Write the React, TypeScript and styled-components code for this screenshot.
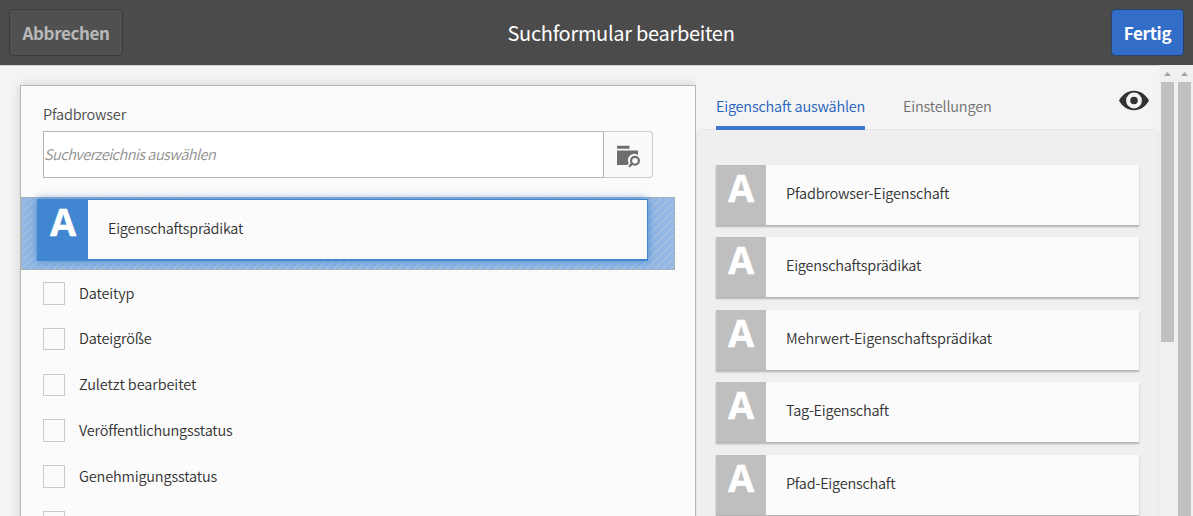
import React from "react";
import styled, { createGlobalStyle, css } from "styled-components";

const GlobalStyle = createGlobalStyle`
  * { box-sizing: border-box; }
  html, body { margin: 0; padding: 0; overflow: hidden; }
  body {
    font-family: "Noto Sans CJK SC", "Noto Sans", sans-serif;
    font-weight: 350;
    font-size: 14.5px;
    line-height: 20px;
    color: #323232;
    background: #f4f4f4;
  }
`;

const Page = styled.div`
  display: flex;
  flex-direction: column;
  width: 100%;
  height: 516px;
  overflow: hidden;
`;

const Text = styled.span<{ $track?: number }>`
  display: block;
  white-space: nowrap;
  letter-spacing: ${(p) => p.$track ?? -0.24}px;
`;

const Header = styled.header`
  flex: none;
  display: grid;
  grid-template-columns: 114px 1fr 73px;
  align-items: center;
  height: 65px;
  padding: 0 9px;
  background: #4b4b4b;
`;

const HeaderButton = styled.button<{ $primary?: boolean }>`
  display: flex;
  align-items: center;
  justify-content: center;
  height: 47px;
  padding: 0;
  border: 1px solid ${(p) => (p.$primary ? "#2b4168" : "#3b3b3b")};
  border-radius: 4px;
  background: ${(p) => (p.$primary ? "#326ec8" : "#505050")};
  color: ${(p) => (p.$primary ? "#ffffff" : "#b9b9b9")};
  font: inherit;
  font-size: 17px;
  font-weight: 700;
`;

const Title = styled.h1`
  margin: 0;
  padding-left: 8px;
  display: flex;
  justify-content: center;
  font-size: 20px;
  font-weight: 400;
  line-height: 26px;
  color: #ffffff;
`;

const Content = styled.main`
  flex: 1;
  display: flex;
  min-height: 0;
`;

const FormColumn = styled.section`
  flex: none;
  width: 696px;
  padding: 19px 0 0 20px;
  border-top: 1px solid #d2d2d2;
  overflow: hidden;
`;

const FormPanel = styled.div`
  height: 500px;
  border: 1px solid #b5b5b5;
  background: #fbfbfb;
  box-shadow: 0 0 10px rgba(0, 0, 0, 0.15);
`;

const PathField = styled.div`
  padding: 18px 0 0 22px;
  height: 111px;
`;

const FieldLabel = styled.label`
  display: block;
  height: 27px;
  color: #4b4b4b;
`;

const InputGroup = styled.div`
  display: flex;
  width: 610px;
  height: 47px;
`;

const PathInput = styled.div`
  flex: 1;
  display: flex;
  align-items: center;
  padding-bottom: 2px;
  border: 1px solid #b5b5b5;
  background: #ffffff;
  color: #8e8e8e;
  font-style: italic;
`;

const BrowseButton = styled.button`
  display: flex;
  align-items: center;
  justify-content: center;
  width: 49px;
  padding: 3px 0 0;
  border: 1px solid #cccccc;
  border-left: 0;
  border-radius: 0 4px 4px 0;
  background: #fafafa;
`;

const SelectedRow = styled.div`
  width: 654px;
  height: 73px;
  padding: 1px 0 0 15px;
  border: 1px dashed #aaaaaa;
  background: repeating-linear-gradient(
    135deg,
    #91b8e6 0 4.4px,
    #b2c3d6 4.8px 5.3px,
    #91b8e6 5.66px
  );
`;

const Card = styled.div<{ $active?: boolean }>`
  display: flex;
  height: 60px;
  background: #fbfbfb;
  box-shadow: 0 1px 0 #b4b4b4, 0 2px 2px rgba(0, 0, 0, 0.25);
  ${(p) =>
    p.$active &&
    css`
      width: 611px;
      height: 62px;
      border: 1px solid #4186d0;
      border-bottom-width: 2px;
      box-shadow: 0 0 8px rgba(50, 120, 200, 0.75);
    `}
`;

const Tile = styled.div<{ $active?: boolean }>`
  flex: none;
  width: 50px;
  background: ${(p) => (p.$active ? "#4186d0" : "#bfbfbf")};
  color: #ffffff;
  font-family: "Open Sans", sans-serif;
  font-size: 38px;
  font-weight: 700;
  -webkit-text-stroke: 0.4px #ffffff;
  line-height: ${(p) => (p.$active ? 43 : 44)}px;
  text-align: center;
`;

const CardLabel = styled.div`
  display: flex;
  align-items: center;
  padding: 0 0 4px 20px;
`;

const CheckList = styled.ul`
  margin: 0;
  padding: 12px 0 0 22px;
  list-style: none;
`;

const CheckRow = styled.li`
  display: flex;
  gap: 14px;
  height: 45.75px;
  ${Text} { padding-top: 0.55px; }
`;

const CheckBox = styled.span`
  width: 22px;
  height: 22.5px;
  border: 1px solid #cacaca;
  background: #fbfbfb;
`;

const SideColumn = styled.aside`
  flex: none;
  display: flex;
  flex-direction: column;
  width: 463px;
  border-top: 1px solid #d2d2d2;
`;

const TabBar = styled.nav`
  flex: none;
  display: flex;
  height: 63px;
  padding-left: 20px;
  gap: 38px;
`;

const Tab = styled.div<{ $selected?: boolean; $width: number }>`
  flex: none;
  width: ${(p) => p.$width}px;
  height: 64px;
  padding-top: 30px;
  z-index: 1;
  border-bottom: 4px solid ${(p) => (p.$selected ? "#4178cd" : "transparent")};
  color: ${(p) => (p.$selected ? "#2361bd" : "#707070")};
`;

const PreviewButton = styled.div`
  margin: 24px 10px 0 auto;
  height: 22px;
`;

const PropertyPanel = styled.div`
  flex: 1;
  min-height: 0;
  display: flex;
  flex-direction: column;
  gap: 12.4px;
  padding: 35px 19px 0;
  overflow: hidden;
  border: 1px solid #e6e6e6;
  border-bottom: 0;
  border-radius: 6px 6px 0 0;
  background: #efefef;
  ${Card} { flex: none; }
`;

const ScrollTrack = styled.div`
  flex: none;
  display: flex;
  flex-direction: column;
  align-items: center;
  width: 17px;
  background: #f1f1f1;
`;

const ScrollArrow = styled.svg`
  flex: none;
  width: 17px;
  height: 17px;
`;

const ScrollThumb = styled.div<{ $height: number }>`
  flex: none;
  width: 13px;
  height: ${(p) => p.$height}px;
  background: #c1c1c1;
`;

const FolderSearchIcon = () => (
  <svg width="24" height="23" viewBox="0 0 24 23" fill="none">
    <path d="M1 .8h12.500v3H1zM1 5.500h21v4.700a6.200 6.200 0 0 0-9.300 7.700L11.500 20H1z" fill="#6e6e6e" />
    <circle cx="19" cy="15.800" r="3.900" stroke="#6e6e6e" strokeWidth="2.200" />
    <path d="M16.200 18.600l-3.200 3.200" stroke="#6e6e6e" strokeWidth="2.300" />
  </svg>
);

const EyeIcon = () => (
  <svg width="30" height="22" viewBox="0 0 30 22">
    <path
      fillRule="evenodd"
      fill="#323232"
      d="M0 10.500C3.500 4.300 8.500.7 15 .7s11.500 3.600 15 9.800c-3.500 6.200-8.500 9.700-15 9.700S3.500 16.700 0 10.500zM15 2.600a7.900 7.900 0 1 0 0 15.800 7.900 7.900 0 0 0 0-15.800zM15 6.700a3.800 3.800 0 1 1 0 7.600A3.800 3.800 0 0 1 15 6.700z"
    />
  </svg>
);

const Scrollbar = ({ height }: { height: number }) => (
  <ScrollTrack>
    <ScrollArrow viewBox="0 0 17 17">
      <path d="M5 11l3.500-4 3.500 4z" fill="#a3a3a3" />
    </ScrollArrow>
    <ScrollThumb $height={height} />
  </ScrollTrack>
);

const filters = [
  { label: "Dateityp", track: -0.14 },
  { label: "Dateigröße", track: -0.14 },
  { label: "Zuletzt bearbeitet", track: -0.1 },
  { label: "Veröffentlichungsstatus", track: -0.17 },
  { label: "Genehmigungsstatus", track: -0.17 },
  { label: "", track: 0 },
];

const properties = [
  { label: "Pfadbrowser-Eigenschaft", track: -0.18 },
  { label: "Eigenschaftsprädikat", track: -0.26 },
  { label: "Mehrwert-Eigenschaftsprädikat", track: -0.11 },
  { label: "Tag-Eigenschaft", track: -0.24 },
  { label: "Pfad-Eigenschaft", track: -0.24 },
];

export default function App() {
  return (
    <>
      <GlobalStyle />
      <Page>
        <Header>
          <HeaderButton><Text $track={-0.4}>Abbrechen</Text></HeaderButton>
          <Title><Text $track={-0.3}>Suchformular bearbeiten</Text></Title>
          <HeaderButton $primary><Text $track={-0.3}>Fertig</Text></HeaderButton>
        </Header>
        <Content>
          <FormColumn>
            <FormPanel>
              <PathField>
                <FieldLabel><Text $track={-0.18}>Pfadbrowser</Text></FieldLabel>
                <InputGroup>
                  <PathInput><Text $track={-0.5}>Suchverzeichnis auswählen</Text></PathInput>
                  <BrowseButton aria-label="Durchsuchen"><FolderSearchIcon /></BrowseButton>
                </InputGroup>
              </PathField>
              <SelectedRow>
                <Card $active>
                  <Tile $active>A</Tile>
                  <CardLabel><Text $track={-0.26}>Eigenschaftsprädikat</Text></CardLabel>
                </Card>
              </SelectedRow>
              <CheckList>
                {filters.map((f, i) => (
                  <CheckRow key={i}>
                    <CheckBox />
                    <Text $track={f.track}>{f.label}</Text>
                  </CheckRow>
                ))}
              </CheckList>
            </FormPanel>
          </FormColumn>
          <SideColumn>
            <TabBar>
              <Tab $selected $width={149}><Text $track={-0.21}>Eigenschaft auswählen</Text></Tab>
              <Tab $width={88}><Text $track={-0.18}>Einstellungen</Text></Tab>
              <PreviewButton><EyeIcon /></PreviewButton>
            </TabBar>
            <PropertyPanel>
              {properties.map((p) => (
                <Card key={p.label}>
                  <Tile>A</Tile>
                  <CardLabel><Text $track={p.track}>{p.label}</Text></CardLabel>
                </Card>
              ))}
            </PropertyPanel>
          </SideColumn>
          <Scrollbar height={260} />
          <Scrollbar height={434} />
        </Content>
      </Page>
    </>
  );
}
